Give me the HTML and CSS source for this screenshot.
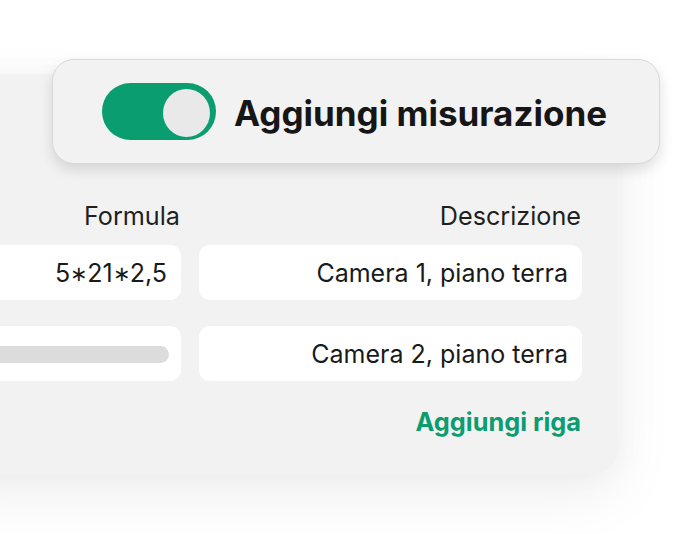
FILE: index.html
```html
<!DOCTYPE html>
<html lang="it">
<head>
<meta charset="utf-8">
<link rel="stylesheet" href="styles.css">
</head>
<body>
<div class="stage">
  <div class="card">
    <div class="grid">
      <div class="label">Formula</div>
      <div class="label">Descrizione</div>
      <div class="field">5<span class="op">∗</span>21<span class="op">∗</span>2,5</div>
      <div class="field">Camera 1, piano terra</div>
      <div class="field"><span class="skeleton"></span></div>
      <div class="field">Camera 2, piano terra</div>
    </div>
    <div class="actions"><span class="add">Aggiungi riga</span></div>
  </div>
  <div class="pill">
    <span class="toggle"><span class="knob"></span></span>
    <span class="title">Aggiungi misurazione</span>
  </div>
</div>
</body>
</html>
```
FILE: styles.css
```css
* { box-sizing: border-box; }
html, body { margin: 0; background: #fff; }
body {
  width: 686px;
  height: 534px;
  overflow: hidden;
  font-family: Inter, "Noto Sans", sans-serif;
  color: #1c1c1c;
}
.stage {
  position: relative;
  width: 686px;
  height: 534px;
  padding-top: 74px;
}
.card {
  margin-left: -60px;
  width: 678px;
  height: 400px;
  background: #f2f2f2;
  border-radius: 0 26px 26px 0;
  box-shadow: 0 20px 60px rgba(0,0,0,0.07), 0 0 30px rgba(0,0,0,0.03);
  padding: 127px 36px 0 0;
}
.grid {
  display: grid;
  grid-template-columns: 241px 383px;
  column-gap: 18px;
  row-gap: 26px;
}
.label {
  text-align: right;
  font-size: 25.2px;
  line-height: 30px;
  margin-bottom: -12px;
  padding-right: 1px;
  color: #1f1f1f;
}
.field {
  background: #fff;
  border-radius: 11px;
  height: 55px;
  display: flex;
  align-items: center;
  justify-content: flex-end;
  padding-right: 14px;
  font-size: 25px;
  color: #1a1a1a;
}
.op {
  display: inline-block;
  margin: 0 -2px;
  transform: scale(0.85);
}
.skeleton {
  display: block;
  width: 100%;
  height: 17px;
  border-radius: 9px;
  background: #dcdcdc;
  margin-left: 20px;
  margin-right: -2px;
  margin-top: 2px;
}
.actions {
  display: flex;
  justify-content: flex-end;
  margin-top: 26px;
}
.add {
  color: #0b9c6f;
  font-weight: 700;
  font-size: 25.3px;
  line-height: 30px;
  margin-right: 1px;
}
.pill {
  position: absolute;
  left: 52px;
  top: 59px;
  width: 608px;
  height: 105px;
  background: #f2f2f2;
  border: 1px solid #d9d9d9;
  border-radius: 22px;
  box-shadow: 0 6px 14px rgba(0,0,0,0.12);
  display: flex;
  align-items: center;
  padding-left: 49px;
  gap: 18px;
}
.toggle {
  width: 114px;
  height: 57px;
  border-radius: 29px;
  background: #0a9d70;
  display: flex;
  align-items: center;
  justify-content: flex-end;
  padding-right: 6px;
}
.knob {
  width: 47px;
  height: 48px;
  border-radius: 50%;
  background: #e9e9e9;
  margin-top: 2px;
}
.title {
  font-size: 35px;
  font-weight: 700;
  color: #161616;
  margin-top: 2px;
}
```
